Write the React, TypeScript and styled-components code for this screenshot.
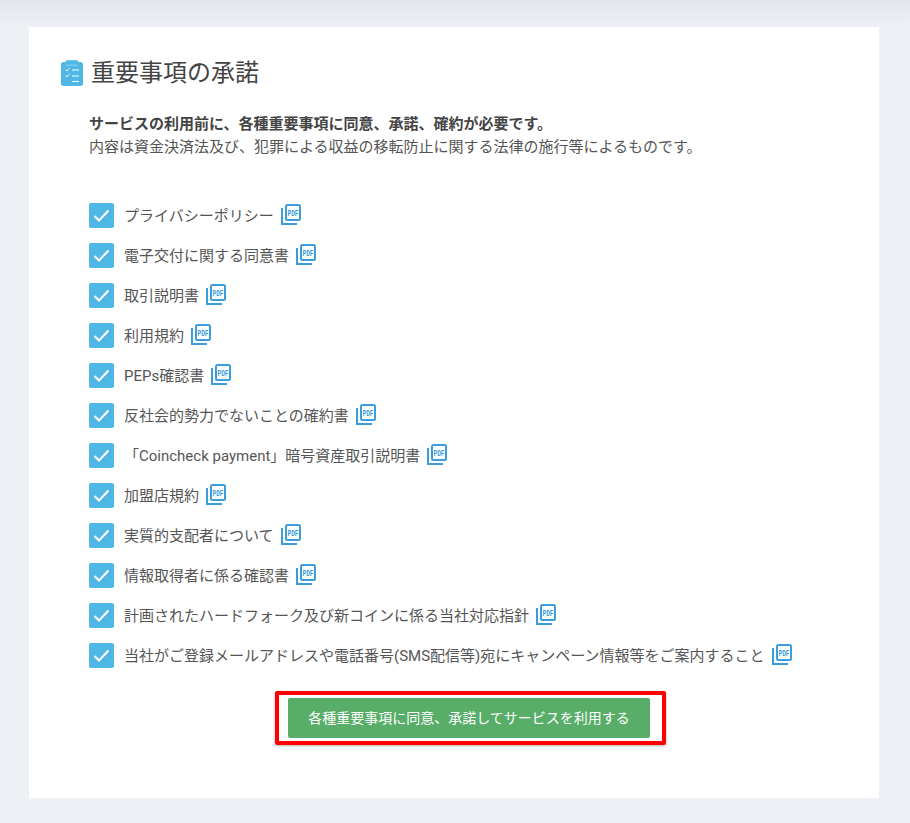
import React from "react";
import styled, { createGlobalStyle } from "styled-components";

const GlobalStyle = createGlobalStyle`
  html, body {
    margin: 0;
    padding: 0;
    background: #edf0f4;
    font-family: Roboto, "Noto Sans CJK JP", sans-serif;
    color: #555;
  }
`;

const Page = styled.div`
  height: 823px;
  box-sizing: border-box;
  padding: 27px 31px 25px 29px;
  background: linear-gradient(to bottom, #e2e5e9 0, #edf0f4 27px);
  overflow: hidden;
`;

const Card = styled.main`
  height: 771px;
  box-sizing: border-box;
  background: #fff;
  padding: 30px 0 0 32px;
`;

const Heading = styled.h1`
  display: flex;
  align-items: center;
  gap: 8px;
  margin: 0;
  height: 32px;
  font-size: 24px;
  line-height: 32px;
  font-weight: 400;
  color: #444;
`;

const Lead = styled.div`
  margin: 24px 0 0 28px;
  font-size: 15px;
  line-height: 23px;
`;

const LeadStrong = styled.div`
  font-weight: 700;
  color: #444;
`;

const List = styled.ul`
  list-style: none;
  margin: 44px 0 0 28px;
  padding: 0;
  display: flex;
  flex-direction: column;
  gap: 15px;
`;

const Row = styled.li`
  display: flex;
  align-items: center;
  height: 25px;
  font-size: 15px;
`;

const Label = styled.span`
  margin-bottom: 2px;
`;

const CheckBox = styled.span`
  display: flex;
  align-items: center;
  justify-content: center;
  width: 25px;
  height: 25px;
  margin-right: 10px;
  border-radius: 2px;
  background: #4fb7e6;
`;

const PdfIcon = styled.svg`
  margin: -3px 0 0 7px;
  flex: none;
  overflow: visible;
`;

const Actions = styled.div`
  display: flex;
  justify-content: center;
  margin: 30px 0 0 -32px;
  padding-left: 30px;
`;

const Highlight = styled.div`
  position: relative;
  display: flex;
`;

const RedFrame = styled.span`
  position: absolute;
  left: -13px;
  right: -16px;
  top: -7px;
  bottom: -7px;
  border: 4px solid #f00;
  border-radius: 2px;
  box-shadow: 0 1px 3px rgba(0, 0, 0, 0.3);
  pointer-events: none;
`;

const SubmitButton = styled.button`
  width: 362px;
  height: 40px;
  padding: 0 0 2px;
  border: 0;
  border-radius: 2px;
  background: #58ad69;
  color: #fff;
  font-family: inherit;
  font-size: 14px;
  cursor: pointer;
`;

const items = [
  "プライバシーポリシー",
  "電子交付に関する同意書",
  "取引説明書",
  "利用規約",
  "PEPs確認書",
  "反社会的勢力でないことの確約書",
  "「Coincheck payment」暗号資産取引説明書",
  "加盟店規約",
  "実質的支配者について",
  "情報取得者に係る確認書",
  "計画されたハードフォーク及び新コインに係る当社対応指針",
  "当社がご登録メールアドレスや電話番号(SMS配信等)宛にキャンペーン情報等をご案内すること",
];

const ClipboardIcon = () => (
  <svg width="22" height="26" viewBox="0 0 22 26" aria-hidden="true">
    <path d="M5 1.500C5 .7 5.600.3 6.300.3h9.400c.7 0 1.300.4 1.300 1.200V2h2.500C21 2 22 3 22 4.500v19c0 1.500-1 2.500-2.500 2.500h-17C1 26 0 25 0 23.500v-19C0 3 1 2 2.500 2H5z" fill="#4fb7e6" />
    <path d="M5 5.200h12" stroke="#8fd2ef" strokeWidth="1" />
    <g fill="none" stroke="#fff" strokeWidth="1">
      <path d="M4.500 9.500l1.300 1.300L8.500 8.200M4.500 15.500l1.300 1.300L8.500 14.200" />
      <path d="M11 10h7M11 16h7M11 21.500h7" />
    </g>
  </svg>
);

const Check = () => (
  <svg width="17" height="13" viewBox="0 0 17 13" aria-hidden="true">
    <path d="M1.500 7l4.500 4.500L15.500 1.500" fill="none" stroke="#fff" strokeWidth="2" />
  </svg>
);

const Pdf = () => (
  <PdfIcon width="20" height="21" viewBox="0 0 20 21" aria-hidden="true">
    <path d="M1 4v16h15" fill="none" stroke="#3b9ddb" strokeWidth="2" />
    <rect x="5" y="1" width="14" height="15" rx="1.500" fill="none" stroke="#3b9ddb" strokeWidth="2" />
    <text x="12" y="12" textAnchor="middle" fontSize="9" fontWeight="700" fontFamily="Liberation Mono, monospace" fill="#3b9ddb" textLength="11" lengthAdjust="spacingAndGlyphs">PDF</text>
  </PdfIcon>
);

export default function App() {
  return (
    <>
      <GlobalStyle />
      <Page>
        <Card>
          <Heading>
            <ClipboardIcon />
            重要事項の承諾
          </Heading>
          <Lead>
            <LeadStrong>サービスの利用前に、各種重要事項に同意、承諾、確約が必要です。</LeadStrong>
            <div>内容は資金決済法及び、犯罪による収益の移転防止に関する法律の施行等によるものです。</div>
          </Lead>
          <List>
            {items.map((item) => (
              <Row key={item}>
                <CheckBox>
                  <Check />
                </CheckBox>
                <Label>{item}</Label>
                <Pdf />
              </Row>
            ))}
          </List>
          <Actions>
            <Highlight>
              <SubmitButton>各種重要事項に同意、承諾してサービスを利用する</SubmitButton>
              <RedFrame />
            </Highlight>
          </Actions>
        </Card>
      </Page>
    </>
  );
}
